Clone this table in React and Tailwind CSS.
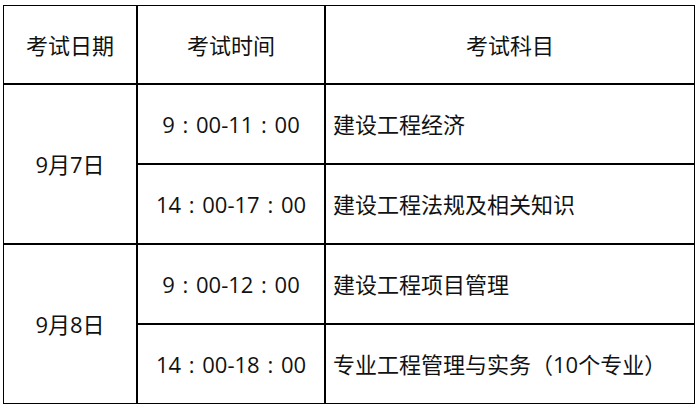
export default function App() {
  const font = { fontFamily: '"Open Sans", "Noto Sans CJK SC", sans-serif' };

  return (
    <div className="w-[697px] h-[408px] bg-white pt-[5px] pl-[3px]" style={font}>
      <div className="w-[692px] h-[399px] border border-black text-[22px] text-[#111] leading-none">
        <div className="grid grid-cols-[134px_188px_368px] grid-rows-[79px_80px_80px_80px_78px]">
          {/* header */}
          <div className="border-r-2 border-b-2 border-black flex items-center justify-center">考试日期</div>
          <div className="border-r-2 border-b-2 border-black flex items-center justify-center">考试时间</div>
          <div className="border-b-2 border-black flex items-center justify-center">考试科目</div>

          {/* 9月7日 */}
          <div className="row-span-2 border-r-2 border-b-2 border-black flex items-center justify-center">9月7日</div>
          <div className="border-r-2 border-b-2 border-black flex items-center justify-center [word-spacing:2px]">9 : 00-11 : 00</div>
          <div className="border-b-2 border-black flex items-center pl-[7px]">建设工程经济</div>
          <div className="border-r-2 border-b-2 border-black flex items-center justify-center [word-spacing:2px]">14 : 00-17 : 00</div>
          <div className="border-b-2 border-black flex items-center pl-[7px]">建设工程法规及相关知识</div>

          {/* 9月8日 */}
          <div className="row-span-2 border-r-2 border-black flex items-center justify-center">9月8日</div>
          <div className="border-r-2 border-b-2 border-black flex items-center justify-center [word-spacing:2px]">9 : 00-12 : 00</div>
          <div className="border-b-2 border-black flex items-center pl-[7px]">建设工程项目管理</div>
          <div className="border-r-2 border-black flex items-center justify-center [word-spacing:2px]">14 : 00-18 : 00</div>
          <div className="flex items-center pl-[7px]">专业工程管理与实务（10个专业）</div>
        </div>
      </div>
    </div>
  );
}
